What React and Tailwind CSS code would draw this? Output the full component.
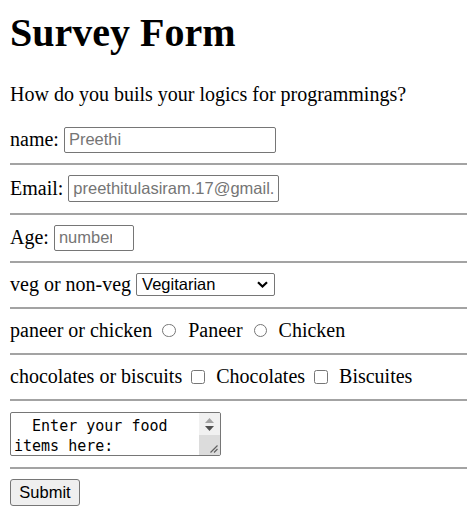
export default function App() {
  const Rule = () => <div className="h-[2px] my-[10px] bg-[#a3a3a3]" />

  const fieldCls =
    "h-[26px] border border-[#767676] rounded-[2px] pl-[4px] bg-white font-['Liberation_Sans',Arial,sans-serif] text-[16.5px] text-black placeholder:text-[#757575] outline-none"

  const Radio = ({ className }) => (
    <span className={`inline-block w-[13.5px] h-[13.5px] rounded-full border border-[#767676] bg-white ${className}`} />
  )

  const Check = ({ className }) => (
    <span className={`inline-block w-[14px] h-[14px] rounded-[2.5px] border border-[#767676] bg-white ${className}`} />
  )

  return (
    <div className="min-h-[510px] bg-white text-black pl-[10px] pt-[10px] font-['Liberation_Serif','Times_New_Roman',serif] text-[20px] leading-[23px]">
      <h1 className="text-[40px] leading-[46px] font-bold">Survey Form</h1>
      <p className="mt-[27px]">How do you buils your logics for programmings?</p>

      <form onSubmit={(e) => e.preventDefault()} className="mt-[20.5px]">
        {/* name */}
        <div className="h-[26px] flex items-center">
          <span>name:</span>
          <input readOnly placeholder="Preethi" className={`${fieldCls} ml-[5px] w-[212px] pr-[4px]`} />
        </div>
        <Rule />

        {/* email */}
        <div className="h-[28px] flex items-center">
          <span>Email:</span>
          <input
            readOnly
            placeholder="preethitulasiram.17@gmail.com"
            className={`${fieldCls} ml-[5px] w-[211px] h-[27px] pr-[4px]`}
          />
        </div>
        <Rule />

        {/* age */}
        <div className="h-[26px] flex items-center">
          <span>Age:</span>
          <input readOnly placeholder="number" className={`${fieldCls} ml-[5px] w-[80px] h-[25px] pr-[21px]`} />
        </div>
        <Rule />

        {/* veg / non-veg */}
        <div className="h-[24px] flex items-center">
          <span>veg or non-veg</span>
          <div className="ml-[5px] w-[139px] h-[23px] flex items-center justify-between border border-[#767676] rounded-[2px] pl-[5px] pr-[6px] bg-white font-['Liberation_Sans',Arial,sans-serif] text-[16.5px] leading-none">
            <span>Vegitarian</span>
            <svg width="11" height="7" viewBox="0 0 11 7" fill="none">
              <path d="M1 1.2 L5.5 5.5 L10 1.2" stroke="#000" strokeWidth="2.2" />
            </svg>
          </div>
        </div>
        <Rule />

        {/* paneer or chicken */}
        <div className="h-[24px] flex items-center">
          <span>paneer or chicken</span>
          <Radio className="ml-[10px] mr-[12.5px]" />
          <span>Paneer</span>
          <Radio className="ml-[11px] mr-[11.5px]" />
          <span>Chicken</span>
        </div>
        <Rule />

        {/* chocolates or biscuits */}
        <div className="h-[24px] flex items-center">
          <span>chocolates or biscuits</span>
          <Check className="ml-[9px] mr-[11px]" />
          <span>Chocolates</span>
          <Check className="ml-[9px] mr-[11px]" />
          <span>Biscuites</span>
        </div>
        <Rule />

        {/* food items */}
        <div className="h-[46px] flex items-start pt-[1.5px]">
          <div className="w-[211px] h-[44px] flex border border-[#767676] rounded-[2px] bg-white overflow-hidden">
            <div className="flex-1 pl-[3px] pt-[2.5px] font-['DejaVu_Sans_Mono',monospace] text-[15px] leading-[20px] whitespace-pre">
              {"  Enter your food\nitems here:"}
            </div>
            <div className="w-[21px] flex flex-col">
              <div className="h-[22px] bg-[#f1f1f1] flex flex-col items-center justify-center gap-[3px]">
                <svg width="9" height="5" viewBox="0 0 9 5">
                  <path d="M0 5 L4.5 0 L9 5 Z" fill="#a3a3a3" />
                </svg>
                <svg width="9" height="5" viewBox="0 0 9 5">
                  <path d="M0 0 L4.5 5 L9 0 Z" fill="#505050" />
                </svg>
              </div>
              <div className="flex-1 bg-[#dcdcdc] flex items-end justify-end pr-[2px] pb-[2px]">
                <svg width="9" height="9" viewBox="0 0 9 9">
                  <path d="M8.5 1.5 L1.5 8.5 M8.5 5 L5 8.5" stroke="#606060" strokeWidth="1.2" />
                </svg>
              </div>
            </div>
          </div>
        </div>
        <Rule />

        {/* submit */}
        <div className="h-[30px] flex items-start">
          <button
            type="submit"
            className="w-[70px] h-[27px] border border-[#767676] rounded-[3px] bg-[#efefef] font-['Liberation_Sans',Arial,sans-serif] text-[16.5px] leading-none text-black"
          >
            Submit
          </button>
        </div>
      </form>
    </div>
  )
}
